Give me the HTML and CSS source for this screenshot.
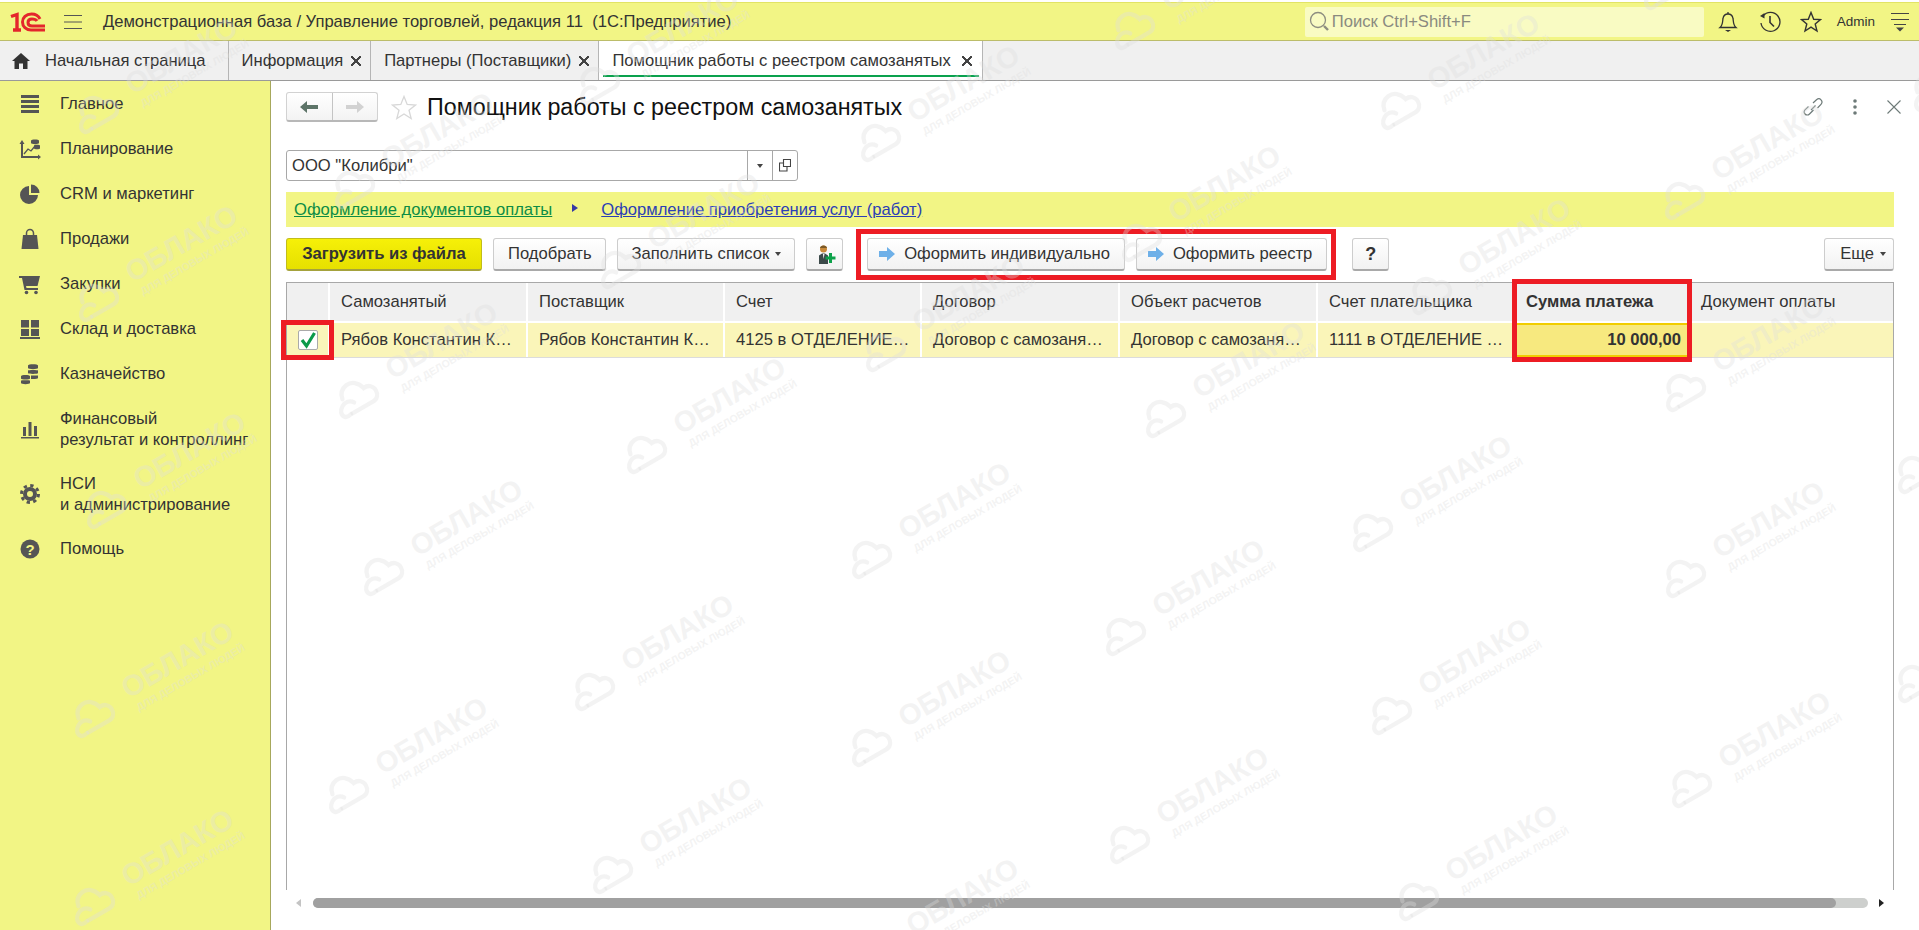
FILE: index.html
```html
<!DOCTYPE html>
<html lang="ru">

<head>
    <meta charset="UTF-8">
    <meta name="viewport" content="width=device-width, initial-scale=1.0">
    <title>Помощник работы с реестром самозанятых</title>
    <link rel="stylesheet" href="styles.css">
</head>

<body>
    <header class="topbar">
        <svg class="logo" width="36" height="20" viewBox="0 0 36 20" fill="none" stroke="#e4262c">
            <path d="M1 4.500 7 2.500V18M3 18H11" stroke-width="3.400" />
            <path d="M30 7C28 3 25 2 21.500 2 16 2 12.500 5.500 12.500 10S16 18 21 18H35" stroke-width="3" />
            <path d="M27 9C26 7.500 24 7 22 7 19.500 7 18 8.500 18 10.500S19.500 14 22 14H35" stroke-width="3" />
        </svg>
        <svg class="burger" width="18" height="14" viewBox="0 0 18 14" stroke="#555">
            <path d="M0 .5H18M0 7H18M0 13.500H18" />
        </svg>
        <div class="app-title">Демонстрационная база / Управление торговлей, редакция 11 &nbsp;(1С:Предприятие)</div>
        <div class="search">
            <svg width="21" height="22" viewBox="0 0 21 22" fill="none" stroke="#8d8d80">
                <circle cx="9" cy="9" r="7.500" stroke-width="1.300" />
                <path d="M15 15 19 19" stroke-width="2.400" />
            </svg>
            <span>Поиск Ctrl+Shift+F</span>
        </div>
        <svg class="top-icon bell" width="20" height="22" viewBox="0 0 20 22" fill="none" stroke="#333" stroke-width="1.300">
            <path d="M2 16.500C5 14 4.500 10 5 7.500 5.500 4.500 7.500 3 10 3S14.500 4.500 15 7.500C15.500 10 15 14 18 16.500Z" />
            <path d="M10 1V3" />
            <path d="M7 19H13L10 21Z" fill="#333" stroke="none" />
        </svg>
        <svg class="top-icon history" width="22" height="22" viewBox="0 0 22 22" fill="none" stroke="#333" stroke-width="1.300">
            <path d="M4 5A9.500 9.500 0 1 1 2 12" />
            <path d="M1 5 5.500 2V7.500Z" fill="#333" stroke="none" />
            <path d="M11 5V11.500L15 15.500" stroke-width="1.600" />
        </svg>
        <svg class="top-icon star" width="22" height="22" viewBox="0 0 22 22" fill="none" stroke="#333" stroke-width="1.400">
            <path d="M11 1.500 13.700 8.300 20.500 8.600 15.200 13 17 20 11 16.200 5 20 6.800 13 1.500 8.600 8.300 8.300Z" />
        </svg>
        <div class="admin">Admin</div>
        <svg class="top-menu" width="18" height="20" viewBox="0 0 18 20" stroke="#444">
            <path d="M0 1.500H18M0 7.500H18M3 12.500H15" />
            <path d="M5 15.500H13L9 19.500Z" fill="#444" stroke="none" />
        </svg>
    </header>

    <nav class="tabs">
        <div class="tab tab-home">
            <svg width="18" height="16" viewBox="0 0 18 16" fill="#333">
                <path d="M9 0 18 8H15.500V16H11V10.500H7V16H2.500V8H0Z" />
            </svg>
            <span>Начальная страница</span>
        </div>
        <div class="tab"><span>Информация</span><i class="tab-close"></i></div>
        <div class="tab"><span>Партнеры (Поставщики)</span><i class="tab-close"></i></div>
        <div class="tab active"><span>Помощник работы с реестром самозанятых</span><i class="tab-close"></i></div>
    </nav>

    <div class="content">
        <aside class="sidebar">
            <div class="side-item">
                <svg viewBox="0 0 22 22" fill="#555">
                    <path d="M2 2H20V5H2ZM2 7H20V10H2ZM2 12H20V15H2ZM2 17H20V20H2Z" />
                </svg>
                <span>Главное</span>
            </div>
            <div class="side-item">
                <svg viewBox="0 0 22 22" fill="#555">
                    <path d="M3 2 5.500 6H4V18H19V16.500L22 19 19 21.500V20H2V6H.5Z" />
                    <path d="M5 16 9 11 12 13 16 8" fill="none" stroke="#555" stroke-width="1.300" />
                    <path d="M12 2.500C12 1 20 1 20 2.500V5C20 6.500 12 6.500 12 5ZM15 7.500C15 6.500 21 6.500 21 7.500V10.500C21 11.500 15 11.500 15 10.500Z" />
                </svg>
                <span>Планирование</span>
            </div>
            <div class="side-item">
                <svg viewBox="0 0 22 22" fill="#555">
                    <path d="M10 3A9 9 0 1 0 19 12H10ZM12 1.500A8.500 8.500 0 0 1 20.500 10H12Z" />
                </svg>
                <span>CRM и маркетинг</span>
            </div>
            <div class="side-item">
                <svg viewBox="0 0 22 22" fill="#555">
                    <path d="M4 7H18L19.500 21H2.500Z" />
                    <path d="M7.500 9V5A3.500 3.500 0 0 1 14.500 5V9" fill="none" stroke="#555" stroke-width="1.500" />
                </svg>
                <span>Продажи</span>
            </div>
            <div class="side-item">
                <svg viewBox="0 0 22 22" fill="#555">
                    <path d="M0 3H21L18.500 13H7L7.500 15H19V17H5.500L3 5H0Z" />
                    <circle cx="7.500" cy="19.500" r="1.800" />
                    <circle cx="17" cy="19.500" r="1.800" />
                </svg>
                <span>Закупки</span>
            </div>
            <div class="side-item">
                <svg viewBox="0 0 22 22" fill="#555">
                    <path d="M2 2H10V9.500H2ZM12 2H20V9.500H12ZM2 11H10V18H2ZM12 11H20V18H12ZM1 19H21V21H1Z" />
                </svg>
                <span>Склад и доставка</span>
            </div>
            <div class="side-item">
                <svg viewBox="0 0 22 22" fill="#555">
                    <path d="M9 2.500C9 .8 19 .8 19 2.500V5C19 6.500 9 6.500 9 5ZM9 7.500C9 6.800 19 6.800 19 7.500V10C19 11.200 9 11.200 9 10ZM12 12.500H19V15C19 16 15 16.200 12 16ZM2 13C2 11.500 11 11.500 11 13V15.500C11 16.800 2 16.800 2 15.500ZM2 17.500C2 17 11 17 11 17.500V20C11 21.500 2 21.500 2 20Z" />
                </svg>
                <span>Казначейство</span>
            </div>
            <div class="side-item">
                <svg viewBox="0 0 22 22" fill="#555">
                    <path d="M4 9H7V18H4ZM9.500 4H12.500V18H9.500ZM15 8H18V18H15ZM2 19H20V20.500H2Z" />
                </svg>
                <span>Финансовый<br>результат и контроллинг</span>
            </div>
            <div class="side-item">
                <svg viewBox="0 0 22 22" fill="none" stroke="#555">
                    <circle cx="11" cy="11" r="5" stroke-width="4" />
                    <circle cx="11" cy="11" r="8.500" stroke-width="3" stroke-dasharray="3.300 3.370" />
                </svg>
                <span>НСИ<br>и администрирование</span>
            </div>
            <div class="side-item">
                <svg viewBox="0 0 22 22">
                    <circle cx="11" cy="11" r="9.500" fill="#555" />
                    <text x="11" y="16.500" class="help-mark">?</text>
                </svg>
                <span>Помощь</span>
            </div>
        </aside>

        <main class="main">
            <div class="title-row">
                <div class="nav-btns">
                    <div class="nav-btn">
                        <svg width="18" height="12" viewBox="0 0 18 12" fill="#5d7468">
                            <path d="M0 6 7 0V4H18V8H7V12Z" />
                        </svg>
                    </div>
                    <div class="nav-btn">
                        <svg width="18" height="12" viewBox="0 0 18 12" fill="#d2d2d2">
                            <path d="M18 6 11 0V4H0V8H11V12Z" />
                        </svg>
                    </div>
                </div>
                <svg class="title-star" width="26" height="25" viewBox="0 0 26 25" fill="none" stroke="#d8d8d8" stroke-width="1.300">
                    <path d="M13 1.500 16.200 9.500 24.500 10 18 15.200 20.200 23.500 13 19 5.800 23.500 8 15.200 1.500 10 9.800 9.500Z" />
                </svg>
                <h1>Помощник работы с реестром самозанятых</h1>
                <div class="title-tools">
                    <svg width="20" height="22" viewBox="0 0 20 22" fill="none" stroke="#6d7a78" stroke-width="1.200">
                        <path d="M8 12 12.500 7.500M10 5 13.500 1.800C15 .5 17 .7 18 1.800S19.200 5 18 6.300L14.500 10M10.500 12 6.500 16C5 17.500 3 17.200 2 16S1 13 2 11.800L5.500 8.500" transform="translate(0 2)" />
                    </svg>
                    <svg width="4" height="16" viewBox="0 0 4 16" fill="#6d7a78">
                        <circle cx="2" cy="2" r="1.800" />
                        <circle cx="2" cy="8" r="1.800" />
                        <circle cx="2" cy="14" r="1.800" />
                    </svg>
                    <svg width="14" height="14" viewBox="0 0 14 14" stroke="#6d7a78" stroke-width="1.100">
                        <path d="M.5.5 13.500 13.500M13.500.5 .5 13.500" />
                    </svg>
                </div>
            </div>

            <div class="org-field">
                <div class="org-value">ООО "Колибри"</div>
                <div class="org-btn"><i class="caret"></i></div>
                <div class="org-btn">
                    <svg width="12" height="13" viewBox="0 0 12 13" fill="none" stroke="#444" stroke-width="1.100">
                        <path d="M4.500 .5H11.500V7.500H4.500ZM4.500 4H.5V12H8V7.500" />
                    </svg>
                </div>
            </div>

            <div class="nav-band">
                <a class="link-green">Оформление документов оплаты</a>
                <i class="band-arrow"></i>
                <a class="link-blue">Оформление приобретения услуг (работ)</a>
            </div>

            <div class="toolbar">
                <div class="btn btn-default">Загрузить из файла</div>
                <div class="btn">Подобрать</div>
                <div class="btn">Заполнить список<i class="caret"></i></div>
                <div class="btn btn-icon">
                    <svg width="22" height="21" viewBox="0 0 22 21">
                        <path d="M5 20V11.500L8 9.500H11L14 11.500V20Z" fill="#3c4a4a" />
                        <path d="M9 10 9.500 15 10.500 10Z" fill="#fff" />
                        <circle cx="9.500" cy="5" r="3.500" fill="#c98a3a" />
                        <path d="M6 4C6 .5 13 .5 13 4Z" fill="#7c5a28" />
                        <path d="M15 9H18V12.500H21.500V15.500H18V19H15V15.500H11.500V12.500H15Z" fill="#0da24a" />
                    </svg>
                </div>
                <div class="red-group">
                    <div class="btn btn-go">
                        <svg width="16" height="14" viewBox="0 0 16 14">
                            <path d="M0 4H8V0L16 7 8 14V10H0Z" fill="#6eb0e8" />
                        </svg>
                        Оформить индивидуально
                    </div>
                    <div class="btn btn-go">
                        <svg width="16" height="14" viewBox="0 0 16 14">
                            <path d="M0 4H8V0L16 7 8 14V10H0Z" fill="#6eb0e8" />
                        </svg>
                        Оформить реестр
                    </div>
                </div>
                <div class="btn btn-help">?</div>
                <div class="btn btn-more">Еще<i class="caret"></i></div>
            </div>

            <div class="table-box">
                <div class="grid-row head-row">
                    <div class="cell"></div>
                    <div class="cell">Самозанятый</div>
                    <div class="cell">Поставщик</div>
                    <div class="cell">Счет</div>
                    <div class="cell">Договор</div>
                    <div class="cell">Объект расчетов</div>
                    <div class="cell">Счет плательщика</div>
                    <div class="cell cell-bold">Сумма платежа</div>
                    <div class="cell">Документ оплаты</div>
                </div>
                <div class="grid-row data-row">
                    <div class="cell cell-check">
                        <div class="checkbox">
                            <svg width="18" height="17" viewBox="0 0 18 17" fill="none" stroke="#0b9a4a" stroke-width="3.200">
                                <path d="M3 8 7.500 14 15.500 1" />
                            </svg>
                        </div>
                    </div>
                    <div class="cell">Рябов Константин К…</div>
                    <div class="cell">Рябов Константин К…</div>
                    <div class="cell">4125 в ОТДЕЛЕНИЕ…</div>
                    <div class="cell">Договор с самозаня…</div>
                    <div class="cell">Договор с самозаня…</div>
                    <div class="cell">1111 в ОТДЕЛЕНИЕ …</div>
                    <div class="cell cell-sum">10 000,00</div>
                    <div class="cell"></div>
                </div>
                <div class="red-box red-check"></div>
                <div class="red-box red-sum"></div>
            </div>

            <div class="hscroll">
                <i class="hscroll-left"></i>
                <div class="hscroll-track">
                    <div class="hscroll-thumb"></div>
                </div>
                <i class="hscroll-right"></i>
            </div>
        </main>
    </div>

    <div class="watermarks" id="watermarks"></div>
    <script src="script.js"></script>
</body>

</html>
```

FILE: styles.css
```css
* {
    box-sizing: border-box;
}

body {
    position: relative;
    width: 1919px;
    height: 930px;
    margin: 0;
    overflow: hidden;
    display: flex;
    flex-direction: column;
    background: #fff;
    color: #333;
    font-family: "Liberation Sans", Arial, sans-serif;
    font-size: 16.6px;
}

i {
    display: block;
}

.topbar {
    height: 39px;
    margin-top: 2px;
    flex: none;
    display: flex;
    align-items: center;
    background: #f2f585;
    border-top: 1px solid #e2e465;
    border-bottom: 1px solid #bcbd6a;
}

.logo {
    margin-left: 10px;
}

.burger {
    margin-left: 18px;
}

.app-title {
    margin-left: 21px;
    white-space: nowrap;
}

.search {
    margin-left: auto;
    width: 399px;
    height: 30px;
    display: flex;
    align-items: center;
    gap: 2px;
    padding-left: 4px;
    background: #f9fbc3;
    border-radius: 2px;
    color: #8a8a80;
}

.top-icon {
    flex: none;
}

.bell {
    margin-left: 14px;
}

.history {
    margin-left: 21px;
}

.star {
    margin-left: 19px;
}

.admin {
    margin-left: 15px;
    font-size: 13.500px;
}

.top-menu {
    margin-left: 16px;
    margin-right: 10px;
}

.tabs {
    height: 40px;
    flex: none;
    display: flex;
    background: #f0f0f0;
    border-bottom: 1px solid #9a9a9a;
}

.tab {
    position: relative;
    display: flex;
    align-items: center;
    padding: 0 9px 0 13px;
    border-right: 1px solid #b5b5b5;
    white-space: nowrap;
}

.tab-home {
    gap: 15px;
    padding: 0 22px 0 12px;
}

.tab.active {
    background: #fff;
    padding-right: 10px;
}

.tab.active .tab-close {
    margin-left: 11px;
}

.tab.active::after {
    content: "";
    position: absolute;
    left: 4px;
    right: 3px;
    bottom: 3px;
    height: 2px;
    background: #0aa14d;
}

.tab-close {
    position: relative;
    width: 10px;
    height: 10px;
    margin-left: 8px;
    background:
        linear-gradient(45deg, transparent 44%, #444 44%, #444 56%, transparent 56%),
        linear-gradient(-45deg, transparent 44%, #444 44%, #444 56%, transparent 56%);
}

.content {
    flex: 1;
    min-height: 0;
    display: flex;
}

.sidebar {
    width: 271px;
    flex: none;
    background: #f2f585;
    border-right: 1px solid #a7a85c;
}

.side-item {
    display: flex;
    align-items: center;
    gap: 19px;
    padding: 11.500px 0 11.500px 19px;
    line-height: 21px;
}

.side-item svg {
    width: 22px;
    height: 22px;
    flex: none;
}

.help-mark {
    fill: #f2f585;
    font-size: 15px;
    font-weight: bold;
    text-anchor: middle;
}

.main {
    flex: 1;
    min-width: 0;
    display: flex;
    flex-direction: column;
    padding: 11px 25px 22px 15px;
}

.title-row {
    height: 30px;
    display: flex;
    align-items: center;
}

.nav-btns {
    display: flex;
    width: 92px;
    height: 30px;
    border: 1px solid #d2d2d2;
    border-bottom: 2px solid #b8b8b8;
    border-radius: 3px;
    background: linear-gradient(#fff, #f3f3f3);
}

.nav-btn {
    flex: 1;
    display: flex;
    align-items: center;
    justify-content: center;
}

.nav-btn + .nav-btn {
    border-left: 1px solid #c4c4c4;
}

.title-star {
    margin-left: 13px;
}

h1 {
    margin: 0 0 0 10px;
    font-size: 23.300px;
    font-weight: normal;
    color: #111;
}

.title-tools {
    margin-left: auto;
    display: flex;
    align-items: center;
    gap: 30px;
    margin-right: -7px;
}

.org-field {
    width: 512px;
    height: 31px;
    margin-top: 28px;
    display: flex;
    border: 1px solid #a8a8a8;
    border-radius: 3px;
}

.org-value {
    flex: 1;
    padding-left: 5px;
    line-height: 29px;
}

.org-btn {
    width: 25px;
    display: flex;
    align-items: center;
    justify-content: center;
    border-left: 1px solid #a8a8a8;
}

.caret {
    width: 0;
    height: 0;
    border-left: 3.500px solid transparent;
    border-right: 3.500px solid transparent;
    border-top: 4px solid #444;
}

.nav-band {
    height: 35px;
    margin-top: 11px;
    display: flex;
    align-items: center;
    padding-left: 8px;
    background: #f2f585;
}

.link-green {
    color: #0c8c45;
    text-decoration: underline;
}

.link-blue {
    color: #2b3fb5;
    text-decoration: underline;
}

.band-arrow {
    width: 0;
    height: 0;
    margin: 0 23px 3px 20px;
    border-top: 4px solid transparent;
    border-bottom: 4px solid transparent;
    border-left: 6px solid #3538a5;
}

.toolbar {
    height: 33px;
    margin-top: 11px;
    display: flex;
    align-items: center;
    gap: 11px;
}

.btn {
    height: 33px;
    display: flex;
    align-items: center;
    padding: 0 13px 0 14px;
    border: 1px solid #cdcdcd;
    border-bottom: 2px solid #a9a9a9;
    border-radius: 3px;
    background: linear-gradient(#fff, #f2f2f2);
    white-space: nowrap;
}

.btn .caret {
    margin-left: 6px;
}

.btn-default {
    width: 196px;
    justify-content: center;
    padding: 0;
    border-color: #c2bd1a #c2bd1a #a5a23c;
    background: linear-gradient(#f6f008, #e6e000);
    font-weight: bold;
}

.btn-icon {
    width: 37px;
    padding: 0;
    justify-content: center;
}

.red-group {
    display: flex;
    gap: 11px;
    height: 51px;
    align-items: center;
    margin: 0 5px 0 2px;
    padding: 0 4px 0 6px;
    border: 5px solid #ed1c24;
}

.btn-go {
    gap: 9px;
    padding: 0 14px 0 11px;
}

.btn-help {
    width: 37px;
    padding: 0;
    justify-content: center;
    font-weight: bold;
    font-size: 18px;
}

.btn-more {
    margin-left: auto;
    padding: 0 7px 0 15px;
}

.table-box {
    position: relative;
    flex: 1;
    min-height: 0;
    margin-top: 11px;
    border: 1px solid #a8a8a8;
    border-bottom: none;
}

.grid-row {
    display: grid;
    grid-template-columns: 43px 198px 197px 197px 198px 198px 199px 173px 203px;
}

.head-row {
    height: 38px;
    background: #f0f0f0;
}

.data-row {
    height: 35px;
    margin-top: 2px;
    border-bottom: 1px solid #dcdcdc;
    background: #faf5b9;
}

.cell {
    display: flex;
    align-items: center;
    padding: 0 9px 0 11px;
    border-right: 2px solid #fff;
    white-space: nowrap;
    overflow: hidden;
}

.cell:last-child {
    border-right: none;
}

.cell-bold {
    padding-left: 9px;
    font-weight: bold;
}

.cell-check {
    padding: 0;
    justify-content: center;
}

.checkbox {
    width: 20px;
    height: 20px;
    display: flex;
    align-items: center;
    justify-content: center;
    background: #fff;
    border: 1px solid #aaa;
    border-radius: 2px;
}

.cell-sum {
    justify-content: flex-end;
    padding-right: 7px;
    background: #f7e97f;
    border-top: 2px solid #f1cd00;
    border-bottom: 2px solid #f1cd00;
    font-weight: bold;
}

.red-box {
    position: absolute;
    border: 5px solid #ed1c24;
}

.red-check {
    left: -6px;
    top: 37px;
    width: 53px;
    height: 40px;
}

.red-sum {
    left: 1225px;
    top: -4px;
    width: 180px;
    height: 83px;
}

.hscroll {
    height: 10px;
    margin-top: 8px;
    display: flex;
    align-items: center;
    padding-left: 10px;
}

.hscroll-left {
    width: 0;
    height: 0;
    margin-right: 12px;
    border-top: 4px solid transparent;
    border-bottom: 4px solid transparent;
    border-right: 5px solid #c4c4c4;
}

.hscroll-right {
    width: 0;
    height: 0;
    margin-left: 11px;
    border-top: 4px solid transparent;
    border-bottom: 4px solid transparent;
    border-left: 5px solid #222;
}

.hscroll-track {
    width: 1555px;
    height: 10px;
    border-radius: 5px;
    background: #cdcfcd;
}

.hscroll-thumb {
    width: 1523px;
    height: 10px;
    border-radius: 5px;
    background: #a0a0a0;
}

.watermarks {
    position: absolute;
    left: 0;
    top: 0;
    width: 100%;
    height: 100%;
    overflow: hidden;
    pointer-events: none;
}

.mark {
    position: absolute;
    width: 0;
    height: 0;
    transform: rotate(-30deg);
    color: rgba(222, 222, 222, 0.36);
    font-weight: bold;
    white-space: nowrap;
}

.mark svg {
    position: absolute;
    left: -24px;
    top: -18px;
}

.mark-name {
    position: absolute;
    left: 41px;
    top: -22px;
    font-size: 29px;
    line-height: 32px;
}

.mark-sub {
    position: absolute;
    left: 44px;
    top: 10px;
    font-size: 10.500px;
    line-height: 12px;
}
```

FILE: script.js
```js
// центры облаков водяного знака
const marks = [
    [95, 112], [351, 187], [596, 83], [877, 140], [1131, 28], [1397, 108], [1681, 198], [1660, -12], [1930, 90],
    [95, 300], [355, 397], [617, 267], [882, 350], [1138, 240], [1428, 293], [1682, 390],
    [103, 507], [380, 574], [643, 452], [868, 557], [1162, 416], [1369, 530], [1682, 576], [1122, 634], [1914, 472],
    [91, 716], [591, 689], [868, 745], [1388, 713], [1688, 786], [1914, 681],
    [345, 792], [609, 872], [91, 904], [1126, 842], [1415, 899], [876, 953]
];

const box = document.getElementById('watermarks');

marks.forEach(([x, y]) => {
    const mark = document.createElement('div');
    mark.className = 'mark';
    mark.style.left = x + 'px';
    mark.style.top = y + 'px';
    mark.innerHTML = `
        <svg width="48" height="36" viewBox="0 0 56 42" fill="none" stroke="currentColor" stroke-width="5" stroke-linecap="round">
            <path d="M16 36H44C50 36 53 31 53 26S49 16 42 17C40 8 33 3 26 4C19 5 15 10 14 16" />
            <path d="M24 26C21 21 15 20 10 23C5 26 3 31 6 35C8 37 11 37 14 36" />
        </svg>
        <div class="mark-name">ОБЛАКО</div>
        <div class="mark-sub">ДЛЯ ДЕЛОВЫХ ЛЮДЕЙ</div>`;
    box.appendChild(mark);
});
```
